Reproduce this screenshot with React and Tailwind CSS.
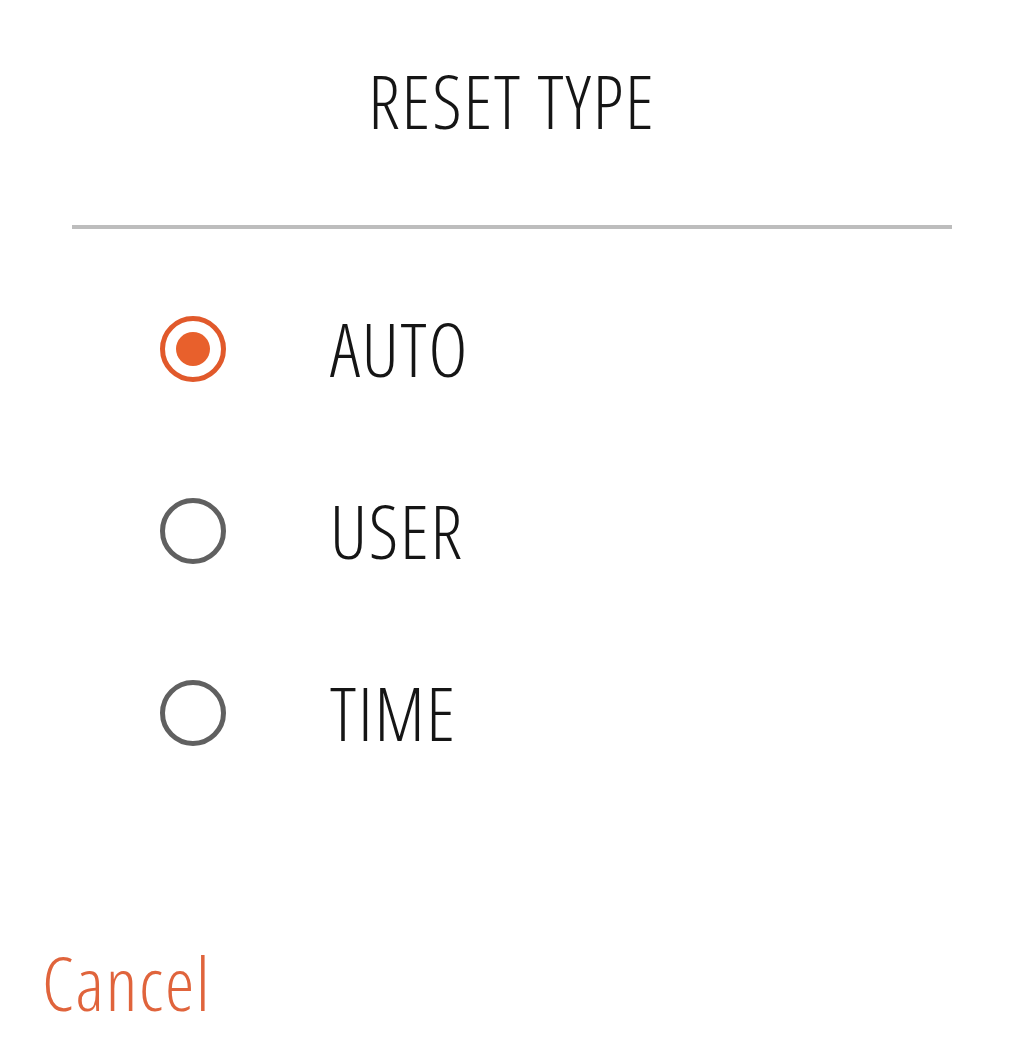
import { useState } from "react";

const OPTIONS = ["AUTO", "USER", "TIME"];

function Radio({ checked }) {
  return (
    <span
      className={[
        "flex items-center justify-center w-[66px] h-[66px] rounded-full border-[5px] shrink-0",
        checked ? "border-[#e1592b]" : "border-[#606060]",
      ].join(" ")}
    >
      {checked && <span className="block w-[34px] h-[34px] rounded-full bg-[#e8602c]" />}
    </span>
  );
}

export default function App() {
  const [value, setValue] = useState("AUTO");

  return (
    <div className="w-[1024px] h-[1043px] bg-white overflow-hidden text-[#151515] font-['Open_Sans','Liberation_Sans',sans-serif] font-stretch-condensed font-light tracking-[1.8px]">
      <div className="pt-[64px] text-center text-[74px] leading-none">RESET TYPE</div>

      <div className="mt-[87px] mx-[72px] h-[4px] bg-[#bdbdbd]" />

      <div className="mt-[29px]">
        {OPTIONS.map((opt) => (
          <button
            key={opt}
            type="button"
            onClick={() => setValue(opt)}
            className="flex items-center h-[182px] w-full pl-[160px] cursor-pointer"
          >
            <Radio checked={value === opt} />
            <span className="ml-[104px] text-[74px] leading-none">{opt}</span>
          </button>
        ))}
      </div>

      <button
        type="button"
        className="block mt-[142px] ml-[42px] text-[74px] leading-none text-[#e0643c] cursor-pointer"
      >
        Cancel
      </button>
    </div>
  );
}
